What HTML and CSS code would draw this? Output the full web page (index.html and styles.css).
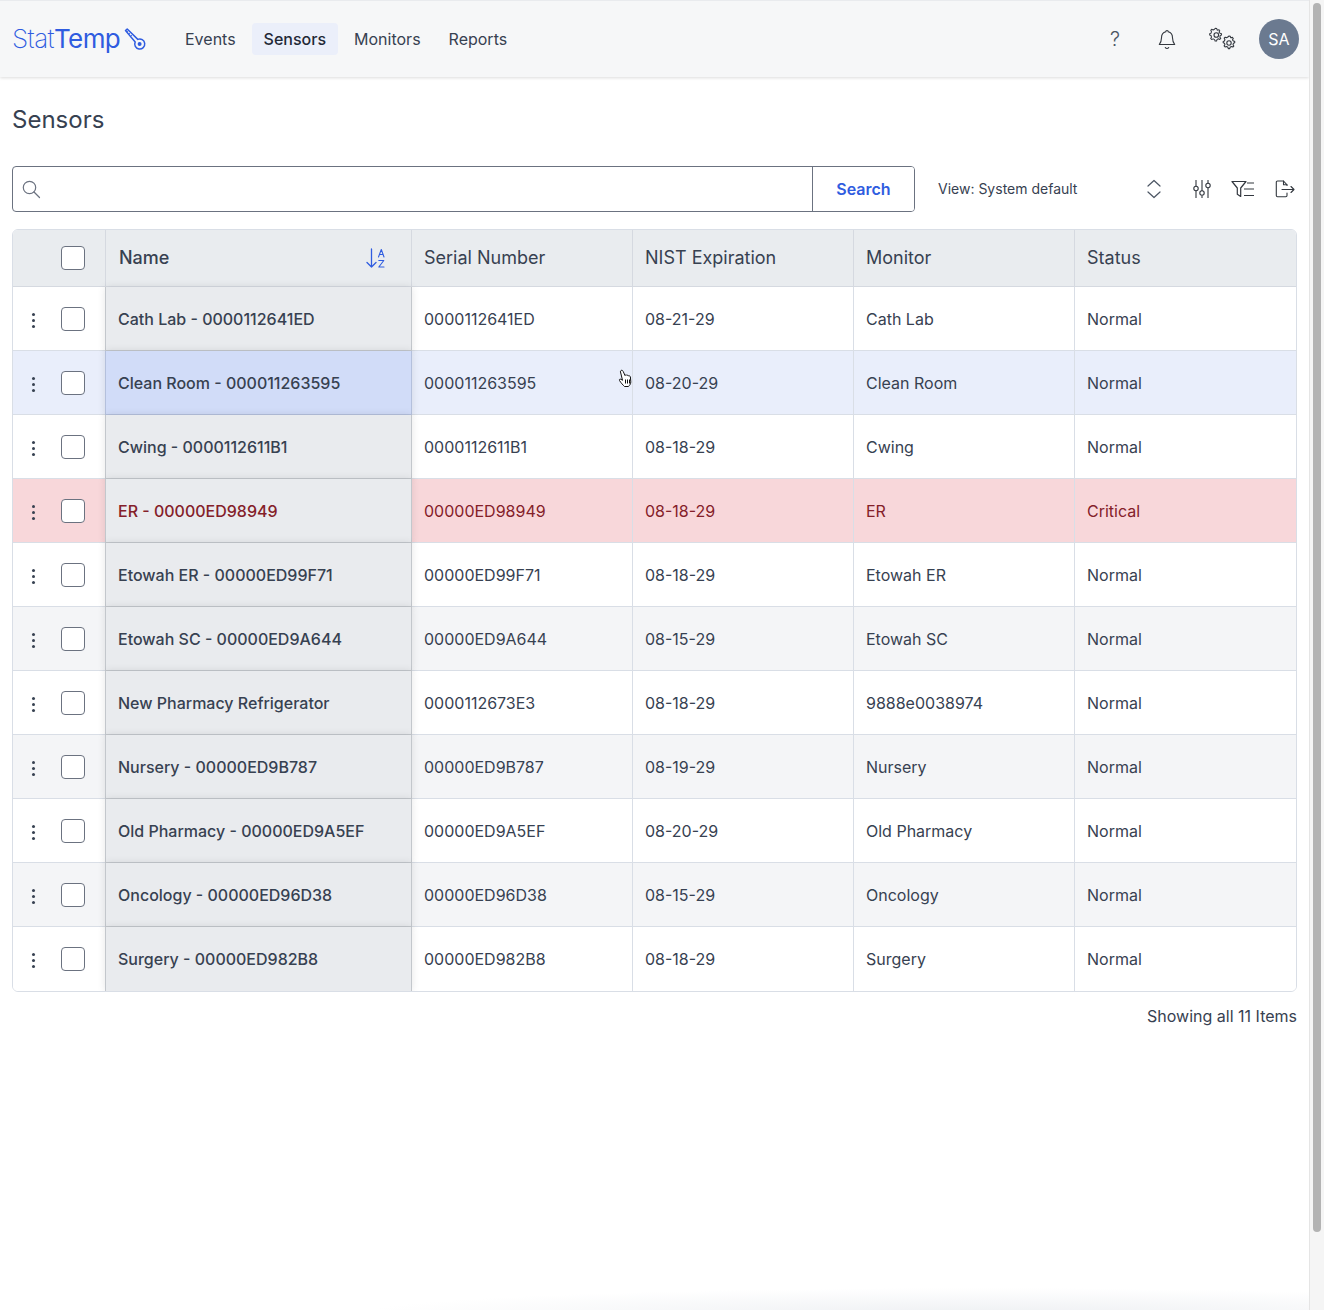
FILE: index.html
```html
<!DOCTYPE html>
<html lang="en">
<head>
    <meta charset="UTF-8">
    <meta name="viewport" content="width=device-width, initial-scale=1.0">
    <title>Sensors - StatTemp</title>
    <link rel="stylesheet" href="styles.css">
</head>
<body>
    <div class="page">
        <header class="topbar">
            <a class="logo" href="#"><span class="logo-thin">Stat</span>Temp
                <svg class="logo-icon" viewBox="0 0 24 24" width="24" height="24" fill="none" stroke="#2f5ce0" stroke-width="1.5">
                    <path d="M2.5 3.6 4.2 2l10.6 10.4a5 5 0 1 1-2.6 2.5z" stroke-linejoin="round"/>
                    <circle cx="16.6" cy="17" r="2" fill="#2f5ce0" stroke="none"/>
                    <path d="M5.5 3.5 4.2 4.8M7.5 5.5 6.2 6.8M9.5 7.5 8.2 8.8" stroke-width="1"/>
                </svg>
            </a>
            <nav class="nav">
                <a href="#">Events</a>
                <a href="#" class="active">Sensors</a>
                <a href="#">Monitors</a>
                <a href="#">Reports</a>
            </nav>
            <div class="topbar-right">
                <span class="help">?</span>
                <svg class="bell" viewBox="0 0 24 24" width="24" height="24" fill="none" stroke="#33383f" stroke-width="1.1" stroke-linejoin="round">
                    <path d="M12 3.5a1.2 1.2 0 0 1 1.2 1.3c3 .7 4.300 3.200 4.300 6 0 3.500.9 5 2.200 6.700H4.300c1.300-1.700 2.200-3.200 2.200-6.700 0-2.800 1.300-5.300 4.300-6A1.200 1.200 0 0 1 12 3.500z"/>
                    <path d="M10.300 20.500a2 2 0 0 0 3.400 0" stroke-linecap="round"/>
                </svg>
                <svg class="gears" viewBox="0 0 28 24" width="28" height="24" fill="none" stroke="#33383f" stroke-width="1.1" stroke-linejoin="round">
                    <path d="M8 2.500 9.500 2.800 10 4.500 11.800 4l1 1.200-.9 1.500 1.300 1.300 1.500.3v1.500l-1.500.6-.3 1.700 1 1.400-1.100 1.100-1.600-.7-1.500.9-.4 1.600H7.700l-.5-1.600-1.600-.8-1.600.7-1.100-1.200.9-1.400-.5-1.700L1.800 9.800V8.300l1.500-.5.500-1.600-.8-1.500L4 3.600l1.600.7L7 3.500z" transform="translate(-1 -1) scale(.92)"/>
                    <circle cx="7.300" cy="8" r="2.300"/>
                    <path d="M20 9l1.300.3.500 1.500 1.600-.4.900 1.100-.8 1.300.9 1.200 1.300.4v1.400l-1.300.5-.4 1.500.8 1.200-1 1-1.400-.5-1.300.8-.4 1.300h-1.400l-.4-1.300-1.400-.8-1.400.5-1-1.100.8-1.200-.4-1.500-1.300-.4v-1.400l1.300-.5.400-1.400-.7-1.300 1-1 1.400.6 1.200-.7z"/>
                    <circle cx="20" cy="16" r="2.200"/>
                </svg>
                <span class="avatar">SA</span>
            </div>
        </header>

        <main class="content">
            <h1 class="page-title">Sensors</h1>

            <div class="toolbar">
                <div class="search">
                    <span class="search-field">
                        <svg viewBox="0 0 20 20" width="20" height="20" fill="none" stroke="#6b7280" stroke-width="1.200">
                            <circle cx="8.500" cy="8.500" r="6.200"/>
                            <path d="M13 13l5.500 5.500" stroke-linecap="round"/>
                        </svg>
                    </span>
                    <button class="search-btn">Search</button>
                </div>
                <div class="view-select">
                    <span>View: System default</span>
                    <svg viewBox="0 0 16 20" width="16" height="20" fill="none" stroke="#4b5563" stroke-width="1.200" stroke-linecap="round" stroke-linejoin="round">
                        <path d="M2 7l6-5.500L14 7M2 13l6 5.500L14 13"/>
                    </svg>
                </div>
                <div class="tools">
                    <svg viewBox="0 0 18 20" width="18" height="20" fill="none" stroke="#33383f" stroke-width="1.100">
                        <path d="M3 1v6M3 12v7M9 1v11M9 16.500V19M15 1v3.500M15 9v10"/>
                        <circle cx="3" cy="9.500" r="2.200"/>
                        <circle cx="9" cy="14" r="2.200"/>
                        <circle cx="15" cy="6.500" r="2.200"/>
                    </svg>
                    <svg viewBox="0 0 24 18" width="24" height="18" fill="none" stroke="#33383f" stroke-width="1.200" stroke-linejoin="round">
                        <path d="M1 1.500h14l-5.300 6.500v8.500l-3.400-2.200V8z"/>
                        <path d="M16 3h7M13 9h10M13 15.500h10"/>
                    </svg>
                    <svg viewBox="0 0 20 18" width="20" height="18" fill="none" stroke="#33383f" stroke-width="1.100" stroke-linejoin="round" stroke-linecap="round">
                        <path d="M12 5.500V4.800L8.500 1H2.500a1.200 1.200 0 0 0-1.200 1.200v13.300a1.200 1.200 0 0 0 1.200 1.200h8.300a1.200 1.200 0 0 0 1.200-1.200V13"/>
                        <path d="M8.500 1v3.800H12M7 9.500h12M16 6.500l3 3-3 3"/>
                    </svg>
                </div>
            </div>

            <div class="table-wrap">
                <table class="sensors">
                    <colgroup>
                        <col class="col-menu">
                        <col class="col-check">
                        <col class="col-name">
                        <col class="col-data">
                        <col class="col-data">
                        <col class="col-data">
                        <col class="col-data">
                    </colgroup>
                    <thead>
                        <tr>
                            <th></th>
                            <th class="check-cell"><span class="checkbox"></span></th>
                            <th class="name-head">
                                <div class="name-head-inner">Name
                                    <svg viewBox="0 0 20 22" width="20" height="22" fill="none" stroke="#2f5ce0" stroke-width="1.300" stroke-linecap="round" stroke-linejoin="round">
                                        <path d="M5.500 2v18M1 15.500l4.500 4.500 4.500-4.500"/>
                                        <path d="M12.500 10l2.800-7.500L18 10M13.500 7.500h3.700" stroke-width="1.100"/>
                                        <path d="M12.800 13.500h5l-5 6.500h5.200" stroke-width="1.100"/>
                                    </svg>
                                </div>
                            </th>
                            <th>Serial Number</th>
                            <th>NIST Expiration</th>
                            <th>Monitor</th>
                            <th>Status</th>
                        </tr>
                    </thead>
                    <tbody>
                        <tr>
                            <td class="menu-cell"><span class="dots"></span></td>
                            <td class="check-cell"><span class="checkbox"></span></td>
                            <td class="name-cell">Cath Lab - 0000112641ED</td>
                            <td>0000112641ED</td><td>08-21-29</td><td>Cath Lab</td><td>Normal</td>
                        </tr>
                        <tr class="hovered">
                            <td class="menu-cell"><span class="dots"></span></td>
                            <td class="check-cell"><span class="checkbox"></span></td>
                            <td class="name-cell">Clean Room - 000011263595</td>
                            <td>000011263595</td><td>08-20-29</td><td>Clean Room</td><td>Normal</td>
                        </tr>
                        <tr>
                            <td class="menu-cell"><span class="dots"></span></td>
                            <td class="check-cell"><span class="checkbox"></span></td>
                            <td class="name-cell">Cwing - 0000112611B1</td>
                            <td>0000112611B1</td><td>08-18-29</td><td>Cwing</td><td>Normal</td>
                        </tr>
                        <tr class="critical">
                            <td class="menu-cell"><span class="dots"></span></td>
                            <td class="check-cell"><span class="checkbox"></span></td>
                            <td class="name-cell">ER - 00000ED98949</td>
                            <td>00000ED98949</td><td>08-18-29</td><td>ER</td><td>Critical</td>
                        </tr>
                        <tr>
                            <td class="menu-cell"><span class="dots"></span></td>
                            <td class="check-cell"><span class="checkbox"></span></td>
                            <td class="name-cell">Etowah ER - 00000ED99F71</td>
                            <td>00000ED99F71</td><td>08-18-29</td><td>Etowah ER</td><td>Normal</td>
                        </tr>
                        <tr class="striped">
                            <td class="menu-cell"><span class="dots"></span></td>
                            <td class="check-cell"><span class="checkbox"></span></td>
                            <td class="name-cell">Etowah SC - 00000ED9A644</td>
                            <td>00000ED9A644</td><td>08-15-29</td><td>Etowah SC</td><td>Normal</td>
                        </tr>
                        <tr>
                            <td class="menu-cell"><span class="dots"></span></td>
                            <td class="check-cell"><span class="checkbox"></span></td>
                            <td class="name-cell">New Pharmacy Refrigerator</td>
                            <td>0000112673E3</td><td>08-18-29</td><td>9888e0038974</td><td>Normal</td>
                        </tr>
                        <tr class="striped">
                            <td class="menu-cell"><span class="dots"></span></td>
                            <td class="check-cell"><span class="checkbox"></span></td>
                            <td class="name-cell">Nursery - 00000ED9B787</td>
                            <td>00000ED9B787</td><td>08-19-29</td><td>Nursery</td><td>Normal</td>
                        </tr>
                        <tr>
                            <td class="menu-cell"><span class="dots"></span></td>
                            <td class="check-cell"><span class="checkbox"></span></td>
                            <td class="name-cell">Old Pharmacy - 00000ED9A5EF</td>
                            <td>00000ED9A5EF</td><td>08-20-29</td><td>Old Pharmacy</td><td>Normal</td>
                        </tr>
                        <tr class="striped">
                            <td class="menu-cell"><span class="dots"></span></td>
                            <td class="check-cell"><span class="checkbox"></span></td>
                            <td class="name-cell">Oncology - 00000ED96D38</td>
                            <td>00000ED96D38</td><td>08-15-29</td><td>Oncology</td><td>Normal</td>
                        </tr>
                        <tr>
                            <td class="menu-cell"><span class="dots"></span></td>
                            <td class="check-cell"><span class="checkbox"></span></td>
                            <td class="name-cell">Surgery - 00000ED982B8</td>
                            <td>00000ED982B8</td><td>08-18-29</td><td>Surgery</td><td>Normal</td>
                        </tr>
                    </tbody>
                </table>
            </div>

            <div class="table-footer">Showing all 11 Items</div>

            <!-- mouse pointer caught in the capture -->
            <svg class="pointer" viewBox="0 0 16 20" width="16" height="20" stroke="#111" stroke-width="1" stroke-linejoin="round">
                <path d="M3 1.500c1-.6 1.800 0 2.200 1L7 6.500l.3-.5c.8-.4 1.400 0 1.700.4.700-.4 1.400 0 1.600.5.800-.3 1.700.2 1.800 1l.4 5c0 2-1 3.500-2.500 4.600H6.500C5 16 3 14 1.500 11.500c-.5-1 .3-1.700 1.500-1.200l1.500 1L2.500 3c-.2-.6 0-1.200.5-1.500z" fill="#fff"/>
                <path d="M7.500 10.500v4M9.500 10.500v4M11.500 10.500v4" fill="none"/>
            </svg>
        </main>

        <div class="fake-scrollbar"><span class="thumb"></span></div>
    </div>
</body>
</html>
```

FILE: styles.css
```css
* {
    margin: 0;
    padding: 0;
    box-sizing: border-box;
    font-family: 'Inter', 'Liberation Sans', sans-serif;
}

body {
    background-color: #fff;
    color: #374151;
    font-size: 16px;
    line-height: 24px;
}

.page {
    position: relative;
    height: 1310px;
    overflow: hidden;
    padding-right: 15px;
    background: radial-gradient(ellipse 620px 26px at 980px 1314px, #eef0f3, rgba(255, 255, 255, 0));
}

/* top bar */
.topbar {
    display: flex;
    align-items: center;
    height: 77px;
    padding: 0 10px 0 12px;
    background-color: #f6f7f8;
    border-top: 1px solid #e9ebee;
    box-shadow: 0 1px 3px rgba(0, 0, 0, 0.14);
}

.logo {
    display: flex;
    align-items: center;
    width: 150px;
    margin-right: 11px;
    color: #2f5ce0;
    font-size: 26px;
    letter-spacing: -0.6px;
    text-decoration: none;
}

.logo-thin {
    font-weight: 200;
}

.logo-icon {
    margin-left: 3px;
}

.nav {
    display: flex;
    gap: 4px;
}

.nav a {
    padding: 4px 12px;
    border-radius: 4px;
    color: #374151;
    text-decoration: none;
}

.nav a.active {
    background-color: #ebeffa;
    color: #1f2937;
    font-weight: 500;
}

.topbar-right {
    display: flex;
    align-items: center;
    margin-left: auto;
}

.help {
    width: 24px;
    margin-right: 28px;
    color: #4b5563;
    font-size: 20px;
    font-weight: 300;
    text-align: center;
}

.bell {
    margin-right: 30px;
}

.gears {
    margin-right: 22px;
}

.avatar {
    display: flex;
    align-items: center;
    justify-content: center;
    width: 40px;
    height: 40px;
    border-radius: 50%;
    background-color: #6b7a90;
    color: #fff;
    font-size: 16px;
}

/* page body */
.content {
    position: relative;
    padding: 0 12px;
}

.page-title {
    margin-top: 29px;
    color: #374151;
    font-size: 24px;
    font-weight: 400;
    line-height: 28px;
}

.toolbar {
    display: flex;
    align-items: center;
    margin-top: 32px;
    height: 46px;
}

.search {
    display: flex;
    width: 903px;
    height: 46px;
    border: 1px solid #6b7280;
    border-radius: 4px;
    overflow: hidden;
}

.search-field {
    display: flex;
    align-items: center;
    flex: 1;
    padding-left: 8px;
}

.search-btn {
    width: 102px;
    border: none;
    border-left: 1px solid #6b7280;
    background-color: #fff;
    color: #2f5ce0;
    font-size: 16px;
    font-weight: 600;
    cursor: pointer;
}

.view-select {
    display: flex;
    align-items: center;
    justify-content: space-between;
    width: 224px;
    margin-left: 23px;
    color: #374151;
    font-size: 14px;
}

.tools {
    display: flex;
    align-items: center;
    gap: 20px;
    margin-left: 31px;
}

/* table */
.table-wrap {
    margin-top: 17px;
    border: 1px solid #d9dee6;
    border-radius: 6px;
    overflow: hidden;
}

.sensors {
    width: 1283px;
    table-layout: fixed;
    border-collapse: separate;
    border-spacing: 0;
}

.col-menu { width: 40px; }
.col-check { width: 52px; }
.col-name { width: 307px; }
.col-data { width: 221px; }

.sensors th {
    height: 57px;
    padding: 0 12px;
    background-color: #e9ecef;
    border-right: 1px solid #d5d9e0;
    border-bottom: 1px solid #d5d9e0;
    font-size: 18px;
    font-weight: 400;
    text-align: left;
}

.sensors th:first-child {
    border-right: none;
}

.sensors th:last-child,
.sensors td:last-child {
    border-right: none;
}

.sensors th.check-cell {
    border-right: none;
}

.sensors th.name-head {
    padding-left: 14px;
    padding-right: 25px;
    box-shadow: inset 1px 0 0 #d5d9e0;
    font-weight: 500;
}

.name-head-inner {
    display: flex;
    align-items: center;
    justify-content: space-between;
}

.sensors td {
    height: 64px;
    padding: 0 12px;
    border-right: 1px solid #d9dee6;
    border-bottom: 1px solid #d9dee6;
    background-color: #fff;
}

.sensors tbody tr:last-child td {
    border-bottom: none;
    height: 64px;
}

.sensors td.menu-cell,
.sensors td.check-cell {
    border-right: none;
}

.sensors .check-cell {
    padding: 0 0 0 8px;
}

.sensors td.menu-cell {
    padding: 0;
    text-align: center;
}

.sensors td.name-cell {
    position: relative;
    padding-left: 12px;
    background-color: #e9ebee;
    border-left: 1px solid #c3c7cc;
    border-right: 1px solid #c3c7cc;
    border-bottom: 1px solid #c3c7cc;
    box-shadow: 0 0 8px rgba(0, 0, 0, 0.1);
    font-weight: 500;
}

.sensors tr.striped td {
    background-color: #f4f5f7;
}

.sensors tr.striped td.name-cell {
    background-color: #e9ebee;
}

.sensors tr.hovered td {
    background-color: #e9eefb;
}

.sensors tr.hovered td.name-cell {
    background-color: #d1dcf8;
    border-color: #b4c0dc;
}

.sensors tr.critical td {
    background-color: #f8d7da;
    color: #842029;
}

.sensors tr.critical td.name-cell {
    background-color: #e9ebee;
}

.checkbox {
    display: block;
    width: 24px;
    height: 24px;
    border: 1px solid #6b7280;
    border-radius: 4px;
    background-color: #fff;
}

.dots {
    position: relative;
    display: inline-block;
    width: 3px;
    height: 3px;
    border-radius: 50%;
    background-color: #374151;
    vertical-align: middle;
    box-shadow: 0 -6px 0 #374151, 0 6px 0 #374151;
}

.table-footer {
    margin-top: 12px;
    color: #374151;
    text-align: right;
}

.pointer {
    position: absolute;
    left: 618px;
    top: 263px;
}

/* scrollbar track as captured */
.fake-scrollbar {
    position: absolute;
    top: 0;
    right: 0;
    bottom: 0;
    width: 15px;
    background-color: #f5f5f5;
    border-left: 1px solid #e5e5e5;
}

.thumb {
    position: absolute;
    top: 3px;
    left: 3px;
    width: 8px;
    height: 1229px;
    border-radius: 4px;
    background-color: #b3b3b3;
}
```
